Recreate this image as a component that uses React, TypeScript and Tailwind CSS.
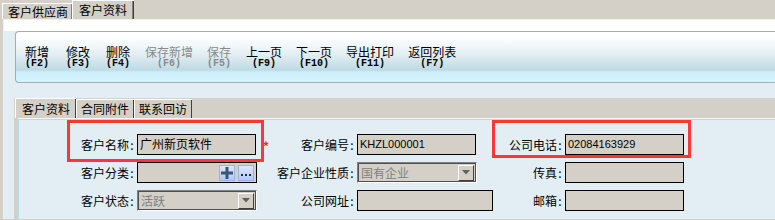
import React from "react";

const CJK = "font-['Noto_Sans_CJK_SC',sans-serif]";

const TOOLS = [
  { label: "新增", key: "(F2)", ml: "ml-[9px]" },
  { label: "修改", key: "(F3)", ml: "ml-[17px]" },
  { label: "删除", key: "(F4)", ml: "ml-[16px]" },
  { label: "保存新增", key: "(F6)", ml: "ml-[15px]", disabled: true },
  { label: "保存", key: "(F5)", ml: "ml-[14px]", disabled: true },
  { label: "上一页", key: "(F9)", ml: "ml-[15px]" },
  { label: "下一页", key: "(F10)", ml: "ml-[14px]" },
  { label: "导出打印", key: "(F11)", ml: "ml-[14px]" },
  { label: "返回列表", key: "(F7)", ml: "ml-[14px]" },
];

function Label({ text, star }: { text: string; star?: boolean }) {
  return (
    <div className="flex items-center justify-between pr-[2px] text-[12px] leading-[14px] text-black">
      {star ? <span className="ml-[6px] mt-[3px] text-[12px] font-bold text-[#ff2020]">*</span> : <span />}
      <span className="whitespace-nowrap">
        {text}
        <span className="inline-block w-[6px] text-center">:</span>
      </span>
    </div>
  );
}

function Field({ value, mono, wide }: { value?: string; mono?: boolean; wide?: boolean }) {
  return (
    <div
      className={`h-[21px] ${wide ? "w-[136px]" : "w-[119px]"} border border-black bg-[#d4d0c8] pl-[2px] pt-[2px] text-black ${
        mono ? "font-['Liberation_Sans',sans-serif] text-[11px] leading-[14px]" : "text-[12px] leading-[14px]"
      }`}
    >
      {value}
    </div>
  );
}

function Select({ value }: { value: string }) {
  return (
    <div className="h-[21px] w-[120px] border border-t-[#808080] border-l-[#808080] border-b-white border-r-white">
      <div className="flex h-full items-center justify-between border border-[#505050] bg-[#d4d0c8] pl-[2px] pr-[1px]">
        <span className="text-[12px] leading-[14px] text-[#808080]">{value}</span>
        <div className="flex h-[16px] w-[16px] items-center justify-center border border-t-white border-l-white border-b-[#404040] border-r-[#404040] bg-[#d4d0c8]">
          <svg width="8" height="5" viewBox="0 0 8 5">
            <path d="M0 0h8L4 4.5z" fill="#606060" />
          </svg>
        </div>
      </div>
    </div>
  );
}

function CategoryField() {
  return (
    <div className="flex h-[21px] w-[120px] items-center justify-end gap-[3px] border border-black bg-[#d4d0c8] pr-[2px]">
      <div className="flex h-[16px] w-[16px] items-center justify-center border border-[#9cb4e0] bg-[linear-gradient(to_bottom,#dce8fc,#b4c8f0)]">
        <svg width="12" height="12" viewBox="0 0 12 12">
          <path d="M4.5 0h3v4.5H12v3H7.5V12h-3V7.5H0v-3h4.5z" fill="#3c5478" />
        </svg>
      </div>
      <div className="flex h-[16px] w-[16px] items-end justify-center border border-[#9cb4e0] bg-[linear-gradient(to_bottom,#dce8fc,#b4c8f0)] pb-[4px]">
        <svg width="10" height="2" viewBox="0 0 10 2">
          <rect x="0" y="0" width="2" height="2" fill="#1c2c50" />
          <rect x="4" y="0" width="2" height="2" fill="#1c2c50" />
          <rect x="8" y="0" width="2" height="2" fill="#1c2c50" />
        </svg>
      </div>
    </div>
  );
}

export default function App() {
  return (
    <div className={`relative h-[220px] w-[775px] overflow-hidden bg-[#d4d0c8] ${CJK}`}>
      {/* top tabs */}
      <div className="flex h-[19px] items-end pl-[2px] text-[12px] leading-[14px] text-black">
        <div className="flex h-[16px] items-center border-l border-t border-white pl-[5px] pr-[4px] shadow-[inset_-1px_0_0_#808080]">
          客户供应商
        </div>
        <div className="flex h-[19px] items-center border-l border-t border-white pl-[6px] pr-[7px] shadow-[inset_-1px_0_0_#404040,inset_-2px_0_0_#808080]">
          客户资料
        </div>
      </div>

      {/* outer panel */}
      <div className="ml-[3px] border-l border-t border-[#f4f0e8] bg-[#e3eef4]">
        <div className="h-[11px] bg-white" />
        <div className="pl-[11px]">
          <div className="flex h-[52px] rounded-l-[4px] border border-r-0 border-[#a4acb4] bg-[linear-gradient(to_bottom,#ffffff_0%,#fcfeff_14%,#e2eef2_45%,#bedae4_76%,#cdeef8_80%,#d3f5fe_100%)] pt-[13px]">
            {TOOLS.map((t) => (
              <div
                key={t.label}
                className={`${t.ml} flex flex-col items-center ${t.disabled ? "text-[#8a8a8a]" : "text-black"}`}
              >
                <span className="text-[12px] leading-[13px]">{t.label}</span>
                <span className="font-['Liberation_Mono',monospace] text-[10px] font-bold leading-[12px]">{t.key}</span>
              </div>
            ))}
          </div>
        </div>
        <div className="h-[15px]" />

        {/* inner tab control */}
        <div className="ml-[10px] bg-[#d4d0c8] pl-[4px]">
          <div className="-ml-[3px] flex h-[20px] items-end text-[12px] leading-[14px] text-black">
            <div className="flex h-[20px] items-center border-l border-t border-white pl-[6px] pr-[6px] shadow-[inset_-1px_0_0_#404040]">
              客户资料
            </div>
            <div className="flex h-[19px] items-center border-l border-t border-white pl-[4px] pr-[5px] shadow-[inset_-1px_0_0_#404040]">
              合同附件
            </div>
            <div className="flex h-[19px] items-center border-l border-t border-white pl-[4px] pr-[5px] shadow-[inset_-1px_0_0_#404040]">
              联系回访
            </div>
          </div>
          <div className="border-t border-[#f8f8f4]">
            <div className="h-[100px] border-l border-t border-[#aedcf0] bg-[#e3eef4] pt-[14px]">
              <div className="grid grid-cols-[118px_120px_100px_136px_72px_120px] grid-rows-[21px_21px_21px] gap-y-[7px]">
                <Label text="客户名称" />
                <Field value="广州新页软件" />
                <Label text="客户编号" star />
                <Field value="KHZL000001" mono />
                <Label text="公司电话" />
                <Field value="02084163929" mono />

                <Label text="客户分类" />
                <CategoryField />
                <Label text="客户企业性质" />
                <Select value="国有企业" />
                <Label text="传真" />
                <Field />

                <Label text="客户状态" />
                <Select value="活跃" />
                <Label text="公司网址" />
                <Field wide />
                <Label text="邮箱" />
                <Field />
              </div>
            </div>
          </div>
        </div>
      </div>

      {/* annotation boxes */}
      <div className="absolute left-[67px] top-[120px] h-[42px] w-[197px] border-[3px] border-[#ff3636]" />
      <div className="absolute left-[492px] top-[120px] h-[38px] w-[199px] border-[3px] border-[#ff3636]" />
    </div>
  );
}
